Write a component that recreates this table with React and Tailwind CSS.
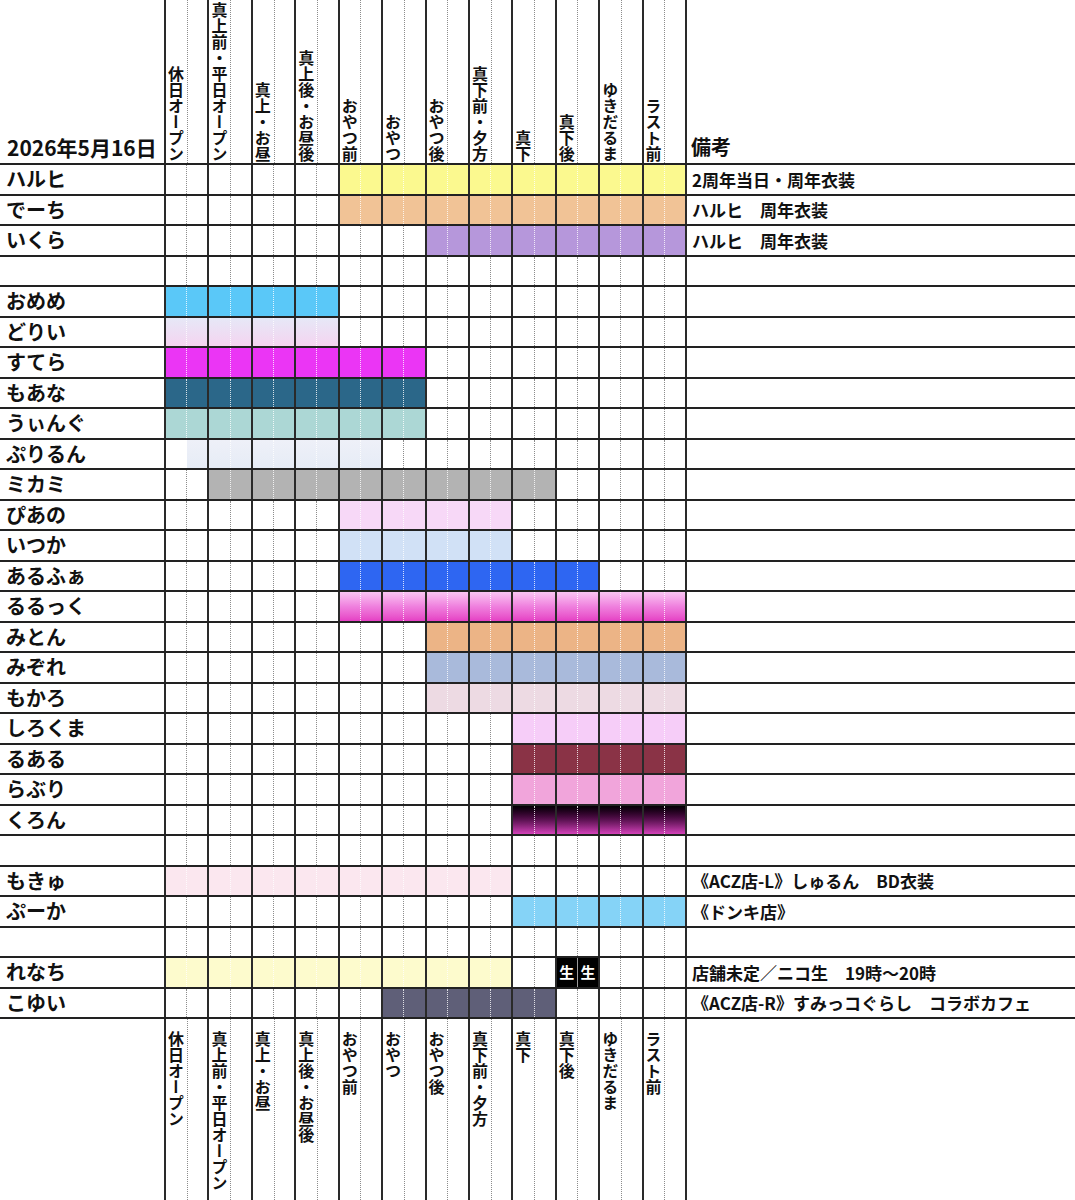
const labels = [
  '休日オープン',
  '真上前・平日オープン',
  '真上・お昼',
  '真上後・お昼後',
  'おやつ前',
  'おやつ',
  'おやつ後',
  '真下前・夕方',
  '真下',
  '真下後',
  'ゆきだるま',
  'ラスト前',
];

// from / to are half-column slots (0..24)
const rows = [
  { name: 'ハルヒ', from: 8, to: 24, fill: 'bg-[#fbf98f]', note: '2周年当日・周年衣装' },
  { name: 'でーち', from: 8, to: 24, fill: 'bg-[#f1c396]', note: 'ハルヒ　周年衣装' },
  { name: 'いくら', from: 12, to: 24, fill: 'bg-[#b697db]', note: 'ハルヒ　周年衣装' },
  { name: '' },
  { name: 'おめめ', from: 0, to: 8, fill: 'bg-[#5ac8f8]' },
  { name: 'どりい', from: 0, to: 8, fill: 'bg-linear-to-b from-[#e6e8f7] to-[#f4d4f0]' },
  { name: 'すてら', from: 0, to: 12, fill: 'bg-[#eb35f5]' },
  { name: 'もあな', from: 0, to: 12, fill: 'bg-[#2b6789]' },
  { name: 'うぃんぐ', from: 0, to: 12, fill: 'bg-[#acd7d5]' },
  { name: 'ぷりるん', from: 1, to: 10, fill: 'bg-linear-to-b from-[#eef0f8] to-[#e6ecf6]' },
  { name: 'ミカミ', from: 2, to: 18, fill: 'bg-[#b3b3b3]' },
  { name: 'ぴあの', from: 8, to: 16, fill: 'bg-[#f7d8f7]' },
  { name: 'いつか', from: 8, to: 16, fill: 'bg-[#d1e1f6]' },
  { name: 'あるふぁ', from: 8, to: 20, fill: 'bg-[#2e66f2]' },
  { name: 'るるっく', from: 8, to: 24, fill: 'bg-linear-to-b from-[#f8c4f2] via-[#ef80de] to-[#e53fc4]' },
  { name: 'みとん', from: 12, to: 24, fill: 'bg-[#ecb486]' },
  { name: 'みぞれ', from: 12, to: 24, fill: 'bg-[#a9badb]' },
  { name: 'もかろ', from: 12, to: 24, fill: 'bg-[#eddae3]' },
  { name: 'しろくま', from: 16, to: 24, fill: 'bg-[#f6cdf8]' },
  { name: 'るある', from: 16, to: 24, fill: 'bg-[#8a3346]' },
  { name: 'らぶり', from: 16, to: 24, fill: 'bg-[#f1a5db]' },
  { name: 'くろん', from: 16, to: 24, fill: 'bg-linear-to-b from-[#050005] via-[#5c1252] to-[#d442ba]' },
  { name: '' },
  { name: 'もきゅ', from: 0, to: 16, fill: 'bg-[#fbe7ef]', note: '《ACZ店-L》しゅるん　BD衣装' },
  { name: 'ぷーか', from: 16, to: 24, fill: 'bg-[#85d3f7]', note: '《ドンキ店》' },
  { name: '' },
  { name: 'れなち', from: 0, to: 16, fill: 'bg-[#fdfbcd]', live: 9, note: '店舗未定／ニコ生　19時〜20時' },
  { name: 'こゆい', from: 10, to: 18, fill: 'bg-[#5f5f78]', note: '《ACZ店-R》すみっコぐらし　コラボカフェ' },
];

const grid = 'grid grid-cols-[164px_repeat(12,minmax(0,1fr))_390px]';
const line = 'border-l-2 border-[#2a2a2a]';

function Slot({ row, c }) {
  if (row.live === c) {
    return (
      <div className={`${line} flex bg-black text-[15px] font-bold text-white`}>
        <div className="flex flex-1 items-center justify-center border-r border-[#9a9a9a]">生</div>
        <div className="flex flex-1 items-center justify-center">生</div>
      </div>
    );
  }
  const on = (h) => row.fill && h >= row.from && h < row.to;
  const left = on(c * 2);
  const right = on(c * 2 + 1);
  return (
    <div className={`${line} flex`}>
      <div
        className={`flex-1 border-r border-dotted ${left ? row.fill : ''} ${
          left || right ? 'border-white/80' : 'border-[#8c8c8c]'
        }`}
      />
      <div className={`flex-1 ${right ? row.fill : ''}`} />
    </div>
  );
}

function LabelRow({ top }) {
  return (
    <div className={`${grid} ${top ? 'h-[165px] border-b-2 border-[#222]' : 'h-[181px]'}`}>
      <div className="flex items-end pb-[5px] pl-[7px] text-[21px] font-bold leading-none">
        {top ? '2026年5月16日' : ''}
      </div>
      {labels.map((l) => (
        <div key={l} className={`${line} flex`}>
          <div
            className={`flex flex-1 flex-col items-start border-r border-dotted border-[#8c8c8c] pl-[1px] ${
              top ? 'justify-end pb-[1px]' : 'justify-start pt-[12px]'
            }`}
          >
            <div className="text-[16px] font-bold leading-[17px] [writing-mode:vertical-rl]">{l}</div>
          </div>
          <div className="flex-1" />
        </div>
      ))}
      <div className={`${line} flex items-end pb-[6px] pl-[4px] text-[20px] font-bold leading-none`}>
        {top ? '備考' : ''}
      </div>
    </div>
  );
}

export default function App() {
  return (
    <div className="h-[1200px] w-[1075px] overflow-hidden bg-white font-['Noto_Sans_CJK_JP',sans-serif] text-[#111]">
      <LabelRow top />
      {rows.map((row, i) => (
        <div key={i} className={`${grid} h-[30.5px] border-b-2 border-[#222]`}>
          <div className="flex items-center pl-[6px] text-[20px] font-bold leading-none">{row.name}</div>
          {labels.map((_, c) => (
            <Slot key={c} row={row} c={c} />
          ))}
          <div className={`${line} flex items-center whitespace-nowrap pl-[5px] text-[17px] font-bold leading-none`}>
            {row.note || ''}
          </div>
        </div>
      ))}
      <LabelRow />
    </div>
  );
}
